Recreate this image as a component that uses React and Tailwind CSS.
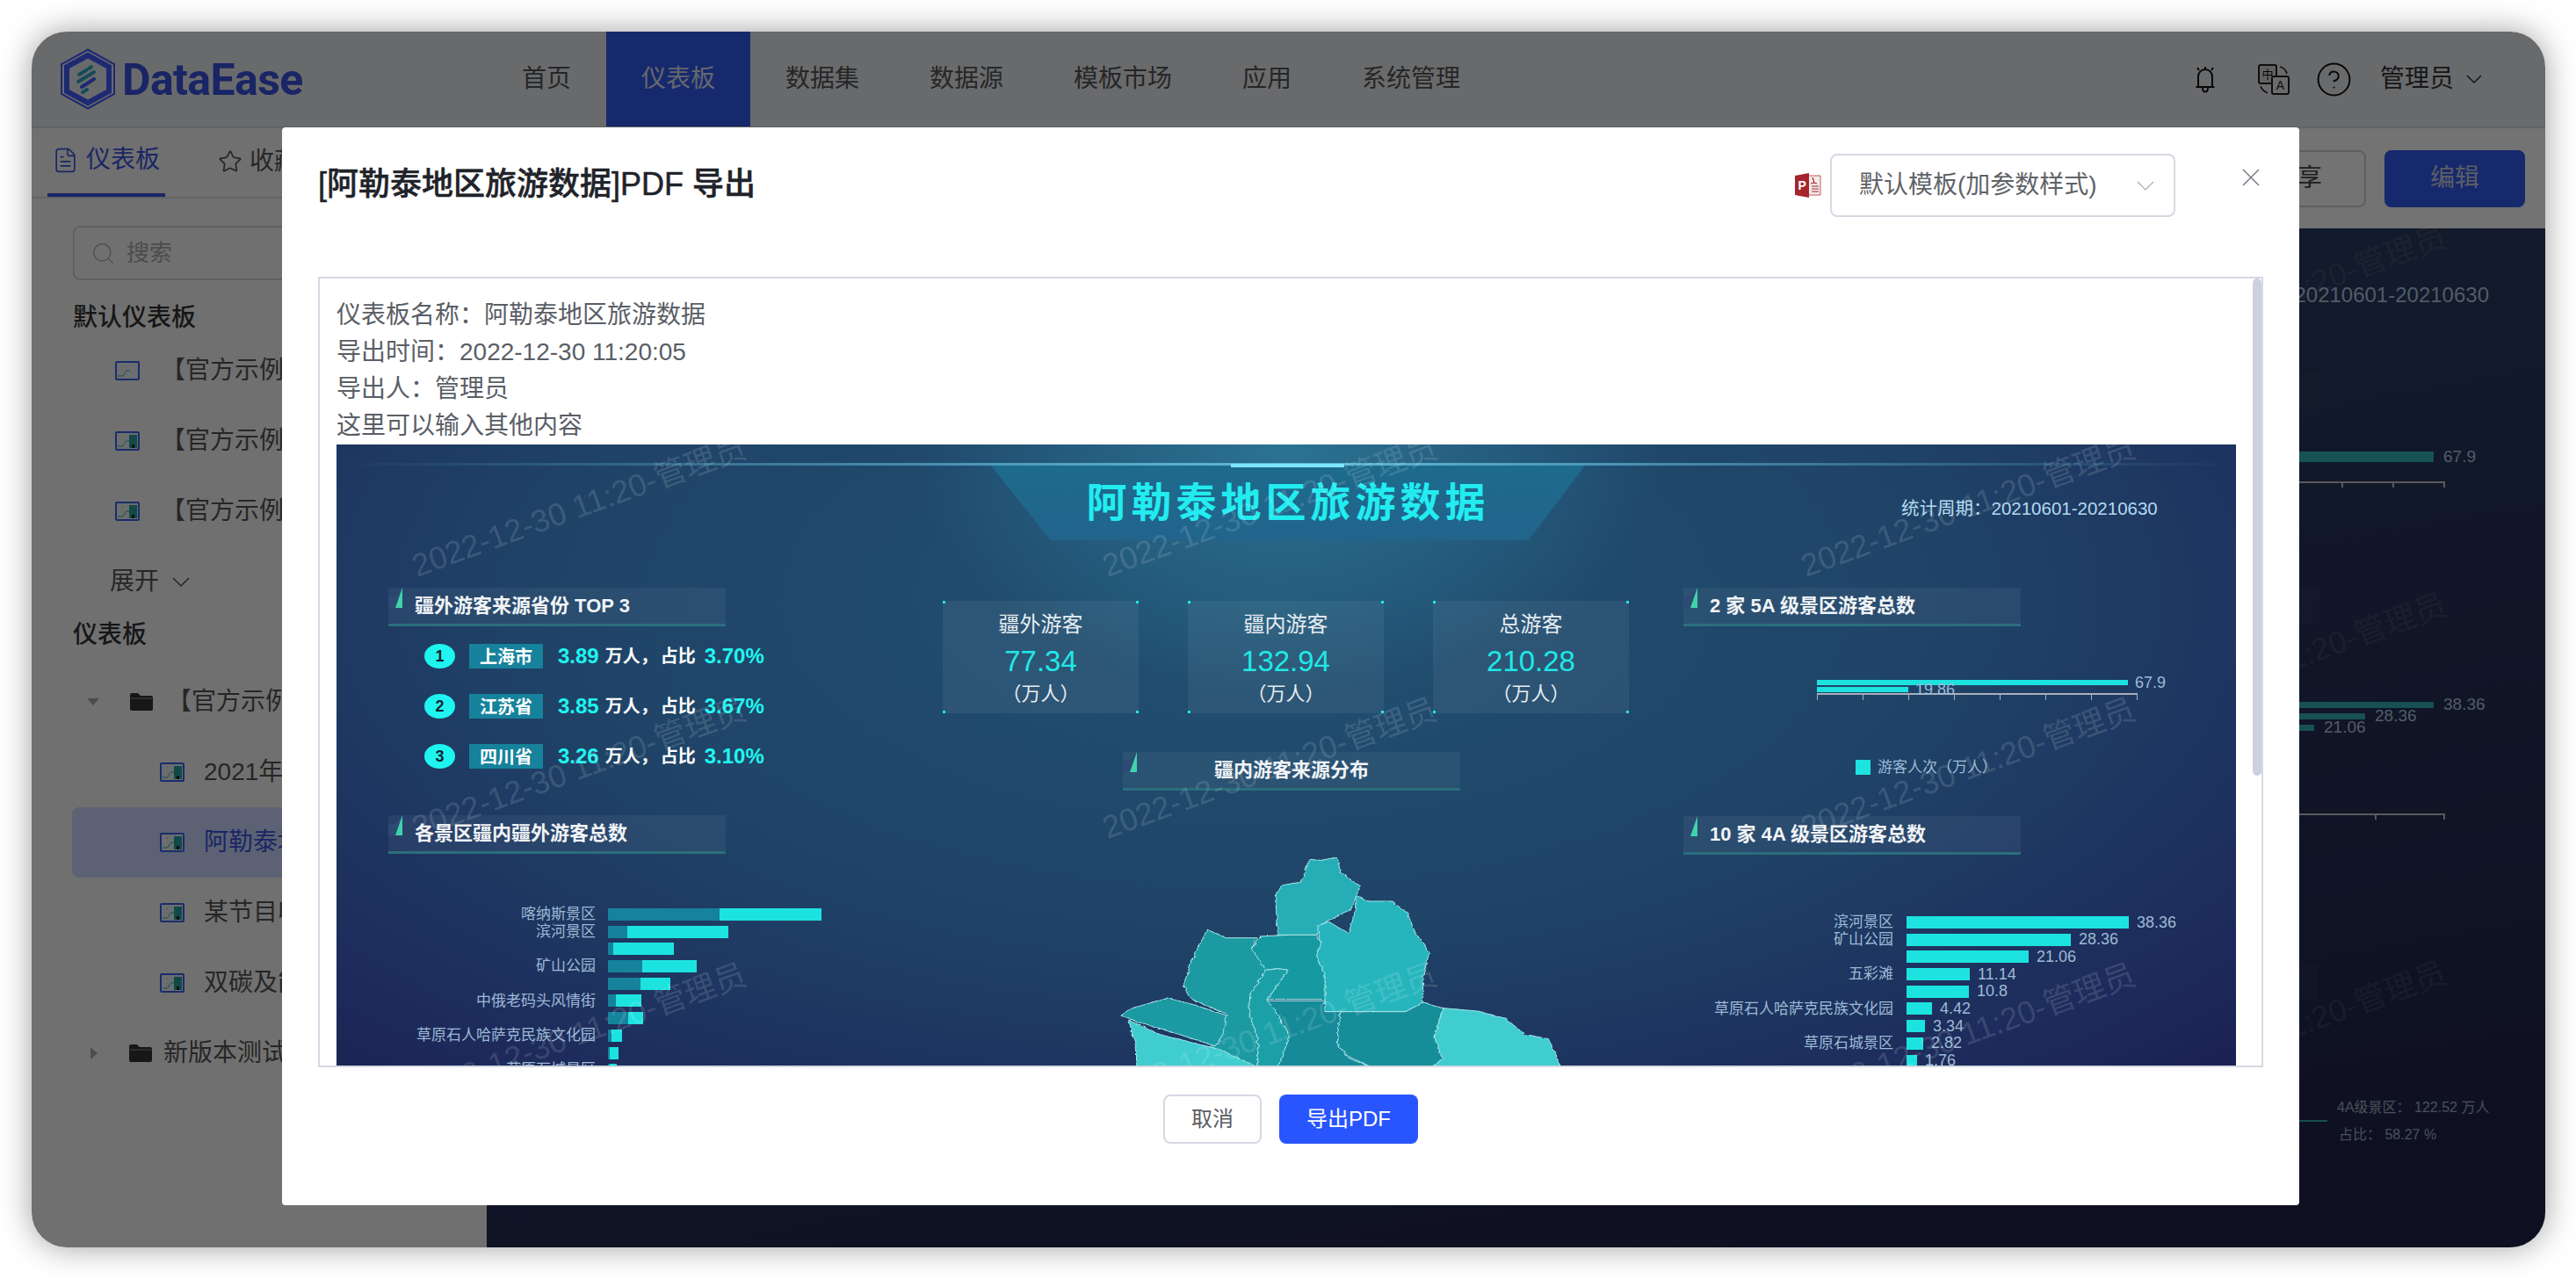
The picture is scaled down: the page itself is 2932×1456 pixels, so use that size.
import React from "react";
import { CircleHelp, FileText, Search, Star } from "lucide-react";

const FONT = "font-['Liberation_Sans','Noto_Sans_CJK_SC',sans-serif]";

function Chev({ w = 20, h = 11, sw = 1.5, className = "" }) {
  return (
    <svg width={w} height={h} viewBox={`0 0 ${w} ${h}`} fill="none" stroke="currentColor" strokeWidth={sw} className={`shrink-0 ${className}`}>
      <path d={`M1 1L${w / 2} ${h - 1}L${w - 1} 1`} />
    </svg>
  );
}

function Logo() {
  return (
    <svg width="64" height="70" viewBox="0 0 64 70" className="shrink-0">
      <polygon points="32,1.5 62,18 62,52 32,68.5 2,52 2,18" fill="none" stroke="#405dff" strokeWidth="2" />
      <polygon points="32,8 56,21 56,49 32,62 8,49 8,21" fill="none" stroke="#405dff" strokeWidth="6" />
      <polygon points="32,15 49,25 49,45 32,55 15,45 15,25" fill="#e9ecf0" />
      <path d="M22 30l8-5M33 23l3-2M21 38l18-11M26 50l5-3" stroke="#2fa7c4" strokeWidth="4" strokeLinecap="round" />
      <path d="M25 44l14-9" stroke="#405dff" strokeWidth="4" strokeLinecap="round" />
    </svg>
  );
}

function Bell() {
  return (
    <svg width="26" height="32" viewBox="0 0 26 32" fill="none" stroke="#111" strokeWidth="2">
      <path d="M5 25V13a8 8 0 0 1 16 0v12z" strokeLinejoin="round" />
      <path d="M2.5 25h21" />
      <path d="M10 26c0 6 6 6 6 0" />
      <path d="M13 2v3M4 3l2 3M22 3l-2 3" />
    </svg>
  );
}

function Translate() {
  return (
    <svg width="36" height="35" viewBox="0 0 36 35" fill="none">
      <rect x="1" y="1" width="20" height="21" rx="2" stroke="#222" strokeWidth="2" fill="#d8d8d8" />
      <text x="11" y="16" textAnchor="middle" fontSize="13" fill="#111" fontFamily="Noto Sans CJK SC">中</text>
      <rect x="16" y="14" width="19" height="20" rx="2" stroke="#222" strokeWidth="2" fill="#eee" />
      <text x="25.5" y="29" textAnchor="middle" fontSize="14" fill="#222" fontFamily="Liberation Sans">A</text>
      <path d="M25 3c4 1 7 4 8 8M3 25c1 4 4 6 8 8" stroke="#222" strokeWidth="1.6" />
    </svg>
  );
}

function Folder() {
  return (
    <svg width="26" height="20" viewBox="0 0 26 20" className="shrink-0">
      <path d="M0 2a2 2 0 0 1 2-2h7l3 3h12a2 2 0 0 1 2 2v13a2 2 0 0 1-2 2H2a2 2 0 0 1-2-2z" fill="#333" />
      <path d="M1 6h24" stroke="#9a9a9a" strokeWidth="1" />
    </svg>
  );
}

function DashIcon({ block = true }) {
  return (
    <svg width="28" height="22" viewBox="0 0 28 22" className="shrink-0">
      <rect x="1" y="1" width="26" height="20" rx="1" fill="#eef4f4" stroke="#3a62ee" strokeWidth="2" />
      <path d="M3 17h5c3 0 2-5 5-6h4M8 6h1" stroke="#2fb3a0" strokeWidth="1" fill="none" />
      {block && <rect x="16" y="4" width="9" height="15" fill="#25a5a0" />}
      {block && <rect x="19" y="15" width="3" height="4" fill="#222" />}
    </svg>
  );
}

function Ppt() {
  return (
    <svg width="30" height="28" viewBox="0 0 30 28">
      <path d="M12 3h17v22H12z" fill="#f3e9e9" stroke="#c65b5b" strokeWidth="1" />
      <path d="M0 3l16-3v28L0 25z" fill="#a4262c" />
      <text x="3.5" y="19" fontSize="14" fontWeight="700" fill="#fff" fontFamily="Liberation Sans">P</text>
      <path d="M20 5l2 6-4 1M22 11l3 1" stroke="#a4262c" strokeWidth="1.2" fill="none" />
      <path d="M19 15h8M19 18h8M19 21h8" stroke="#a4262c" strokeWidth="1.2" />
    </svg>
  );
}

function Watermark({ x, y, color }) {
  return (
    <div
      className="pointer-events-none absolute whitespace-nowrap text-[36px] leading-none -translate-x-1/2 -translate-y-1/2 -rotate-[20deg]"
      style={{ left: x, top: y, color }}
    >
      2022-12-30 11:20-管理员
    </div>
  );
}

function SideRow({ icon, text, active, indent }) {
  return (
    <div className={`flex h-[80px] items-center rounded-lg whitespace-nowrap text-[28px] ${indent} ${active ? "bg-[#cdd9ff] text-[#3a55e0]" : "text-[#555]"}`}>
      {icon}
      <span>{text}</span>
    </div>
  );
}

function Sidebar() {
  return (
    <aside className="w-[518px] shrink-0 overflow-hidden bg-[#f9f9f9]">
      <div className="flex h-[80px] items-end border-b-2 border-[#dedede] pl-[18px]">
        <div className="flex h-[80px] w-[134px] items-center gap-[8px] border-b-4 border-[#3a55e0] pl-[5px] text-[28px] text-[#3a55e0]">
          <FileText size={31} strokeWidth={1.3} />
          <span>仪表板</span>
        </div>
        <div className="ml-[60px] flex h-[80px] items-center gap-[8px] text-[28px] text-[#555]">
          <Star size={28} strokeWidth={1.5} />
          <span>收藏</span>
        </div>
      </div>
      <div className="ml-[47px] mt-[31px] flex h-[62px] w-[424px] items-center gap-[12px] rounded-lg border-2 border-[#d5d6dc] pl-[18px] text-[26px] text-[#aaa]">
        <Search size={29} strokeWidth={1.1} />
        <span>搜索</span>
      </div>
      <h3 className="ml-[47px] mt-[22px] h-[41px] text-[28px] font-medium leading-[41px] text-[#333]">默认仪表板</h3>
      <SideRow indent="pl-[95px] gap-[24px]" icon={<DashIcon block={false} />} text="【官方示例】地区销售数据看板" />
      <SideRow indent="pl-[95px] gap-[24px]" icon={<DashIcon />} text="【官方示例】经营数据分析看板" />
      <SideRow indent="pl-[95px] gap-[24px]" icon={<DashIcon />} text="【官方示例】节目收视分析看板" />
      <div className="ml-[89px] mt-[2px] flex h-[76px] items-center gap-[15px] text-[28px] text-[#555]">
        <span>展开</span>
        <Chev w={20} h={11} />
      </div>
      <h3 className="ml-[47px] mt-[1px] h-[43px] text-[28px] font-medium leading-[43px] text-[#333]">仪表板</h3>
      <div className="ml-[46px] mt-[15px] w-[460px]">
        <SideRow
          indent="pl-[17px]"
          icon={<span className="flex items-center"><span className="h-0 w-0 border-x-[7px] border-t-[8px] border-x-transparent border-t-[#aaa]" /><span className="ml-[35px]"><Folder /></span><span className="w-[16px]" /></span>}
          text="【官方示例】数据大屏"
        />
        <SideRow indent="pl-[100px] gap-[22px]" icon={<DashIcon />} text="2021年度数据报告" />
        <SideRow active indent="pl-[100px] gap-[22px]" icon={<DashIcon />} text="阿勒泰地区旅游数据" />
        <SideRow indent="pl-[100px] gap-[22px]" icon={<DashIcon />} text="某节目收视数据分析" />
        <SideRow indent="pl-[100px] gap-[22px]" icon={<DashIcon />} text="双碳及能源数据看板" />
        <SideRow
          indent="pl-[21px]"
          icon={<span className="flex items-center"><span className="h-0 w-0 border-y-[7px] border-l-[8px] border-y-transparent border-l-[#aaa]" /><span className="ml-[36px]"><Folder /></span><span className="w-[13px]" /></span>}
          text="新版本测试仪表板"
        />
      </div>
    </aside>
  );
}

function Axis({ ticks, width }) {
  return (
    <div className="flex h-[8px] justify-end border-t-2 border-[#c8c8c8]" style={{ width }}>
      {ticks.map((t, i) => (
        <div key={i} className="h-[5px] border-r-2 border-[#c8c8c8]" style={{ width: t }} />
      ))}
    </div>
  );
}

function Main() {
  const rows = [
    { w: 437, v: "38.36" },
    { w: 359, v: "28.36" },
    { w: 301, v: "21.06" },
  ];
  return (
    <main className="flex flex-1 flex-col">
      <div className="flex h-[114px] items-center justify-end gap-[21px] pr-[23px]">
        <button className="h-[65px] w-[156px] rounded-lg border-2 border-[#d0d0d0] text-[28px] text-[#444]">分享</button>
        <button className="h-[65px] w-[160px] rounded-lg bg-[#325bef] text-[28px] text-[#c9d0e4]">编辑</button>
      </div>
      <div className="relative flex flex-1 flex-col items-end overflow-hidden bg-[linear-gradient(170deg,#2a4567_0%,#263158_55%,#202247_100%)] text-[#b4cbe4]">
        <div className="mr-[64px] mt-[62px] h-[28px] text-[24px] leading-[28px]">20210601-20210630</div>
        <div className="mr-[258px] mt-[74px] h-[41px] w-[400px] bg-white/[.03]" />
        <div className="mr-[64px] mt-[49px] flex h-[12px] items-center gap-[11px]">
          <div className="h-[12px] w-[400px] bg-[#3aebe3]/70" />
          <span className="w-[52px] text-[19px]">67.9</span>
        </div>
        <div className="mr-[114px] mt-[22px]">
          <Axis ticks={[58, 58, 58]} width={400} />
        </div>
        <div className="mr-[258px] mt-[113px] h-[41px] w-[400px] bg-white/[.03]" />
        <div className="mr-[64px] mt-[89px] flex w-[500px] flex-col gap-[6px]">
          {rows.map((r) => (
            <div key={r.v} className="flex h-[7px] items-center gap-[11px]">
              <div className="h-[7px] bg-[#3aebe3]/70" style={{ width: r.w }} />
              <span className="text-[19px]">{r.v}</span>
            </div>
          ))}
        </div>
        <div className="mr-[114px] mt-[94px]">
          <Axis ticks={[78, 78]} width={400} />
        </div>
        <div className="mr-[258px] mt-[163px] h-[41px] w-[400px] bg-white/[.03]" />
        <div className="mr-[67px] mt-[107px] flex items-center gap-[11px]">
          <div className="h-[2px] w-[300px] bg-[#3aebe3]/70" />
          <div className="w-[170px] whitespace-nowrap text-[16px] leading-[31px] text-[#9fb2c8]">
            <div>4A级景区： 122.52 万人</div>
            <div className="pl-[2px]">占比： 58.27 %</div>
          </div>
        </div>
        <Watermark x={2040} y={77} color="rgba(255,255,255,.1)" />
        <Watermark x={2040} y={496} color="rgba(255,255,255,.1)" />
        <Watermark x={2040} y={915} color="rgba(255,255,255,.1)" />
      </div>
    </main>
  );
}

function TitleCard({ text, center, extra = "" }) {
  return (
    <div className={`relative flex h-[44px] items-center border-b-[3px] border-[#2b6e7c] bg-white/[.05] ${center ? "justify-center" : "pl-[30px]"} ${extra}`}>
      <svg width="16" height="23" viewBox="0 0 16 23" className="absolute left-0 top-0">
        <path d="M0 23V10h7l9-10v23z" fill="#2d4a72" />
        <path d="M16 0v23H8z" fill="#3fd3ab" />
      </svg>
      <span className="text-[22px] font-bold text-[#f1f4f7]">{text}</span>
    </div>
  );
}

function Rank({ n, city, num, pct }) {
  return (
    <div className="flex h-[28px] items-center pl-[41px]">
      <span className="flex h-[28px] w-[35px] items-center justify-center rounded-[50%] bg-[#1ff5f0] text-[18px] font-bold text-[#123]">{n}</span>
      <span className="ml-[16px] flex h-[28px] w-[84px] items-end justify-center bg-[#16829c] text-[20px] font-bold leading-[26px] text-white">{city}</span>
      <span className="ml-[17px] text-[24px] font-bold text-[#1ff5f0]">{num}</span>
      <span className="ml-[7px] text-[20px] font-bold text-white">万人，</span>
      <span className="ml-[3px] text-[20px] font-bold text-white">占比</span>
      <span className="ml-[10px] text-[24px] font-bold text-[#1ff5f0]">{pct}</span>
    </div>
  );
}

function StatCard({ title, value }) {
  return (
    <div className="relative flex h-[128px] w-[223px] flex-col items-center bg-white/[.06] pt-[11px]">
      <span className="absolute left-0 top-0 h-[3px] w-[3px] bg-[#1fe8e6]" />
      <span className="absolute right-0 top-0 h-[3px] w-[3px] bg-[#1fe8e6]" />
      <span className="absolute bottom-0 left-0 h-[3px] w-[3px] bg-[#1fe8e6]" />
      <span className="absolute bottom-0 right-0 h-[3px] w-[3px] bg-[#1fe8e6]" />
      <span className="text-[24px] leading-[32px] text-[#e6edf2]">{title}</span>
      <span className="mt-[6px] text-[33px] leading-[40px] text-[#1fe8e6]">{value}</span>
      <span className="mt-[2px] text-[22px] leading-[30px] text-[#e6edf2]">（万人）</span>
    </div>
  );
}

function StackBars() {
  const data = [
    ["喀纳斯景区", 127, 116],
    ["滨河景区", 22, 115],
    ["", 6, 69],
    ["矿山公园", 39, 62],
    ["", 37, 34],
    ["中俄老码头风情街", 9, 29],
    ["", 23, 17],
    ["草原石人哈萨克民族文化园", 4, 12],
    ["", 2, 10],
    ["草原石城景区", 2, 8],
  ];
  return (
    <div className="mt-[62px] flex flex-col gap-[5.7px]">
      {data.map(([label, a, b], i) => (
        <div key={i} className="flex h-[14px] items-center">
          <span className="w-[236px] shrink-0 whitespace-nowrap text-right text-[17px] text-[#9dbad6]">{label}</span>
          <div className="ml-[14px] h-[14px] shrink-0 bg-[#16829c]" style={{ width: a }} />
          <div className="h-[14px] shrink-0 bg-[#1de3e0]" style={{ width: b }} />
        </div>
      ))}
    </div>
  );
}

function TenBars() {
  const data = [
    ["滨河景区", 253, "38.36"],
    ["矿山公园", 187, "28.36"],
    ["", 139, "21.06"],
    ["五彩滩", 72, "11.14"],
    ["", 71, "10.8"],
    ["草原石人哈萨克民族文化园", 29, "4.42"],
    ["", 21, "3.34"],
    ["草原石城景区", 19, "2.82"],
    ["", 12, "1.76"],
  ];
  return (
    <div className="mt-[70px] flex flex-col gap-[5.7px]">
      {data.map(([label, w, v], i) => (
        <div key={i} className="flex h-[14px] items-center">
          <span className="w-[239px] shrink-0 whitespace-nowrap text-right text-[17px] text-[#9dbad6]">{label}</span>
          <div className="ml-[15px] h-[14px] shrink-0 bg-[#1de3e0]" style={{ width: w }} />
          <span className="ml-[9px] shrink-0 text-[18px] text-[#9dbad6]">{v}</span>
        </div>
      ))}
    </div>
  );
}

function MapShape() {
  const regions = [
    ["#28aeb6", "325,172 340,175 360,165 365,215 390,265 385,295 380,340 340,395 335,430 300,430 285,430 282,300 290,260 315,250"],
    ["#26b5bd", "385,295 400,315 430,315 450,355 460,420 478,490 470,570 470,660 448,692 345,692 345,570 335,500 340,460 335,400 350,385 375,425 385,340"],
    ["#199aa2", "262,435 300,430 335,430 340,460 335,500 345,570 345,650 272,650 298,550 285,545 270,550 255,510 252,480"],
    ["#1b9aa2", "195,412 220,440 258,440 252,480 270,550 250,630 248,700 260,780 260,882 130,882 210,800 220,700 175,650 165,600 175,520"],
    ["#1ca0a8", "285,545 298,550 272,650 285,700 300,780 285,882 260,882 260,780 248,700 250,630 270,550"],
    ["#1a9aa4", "85,705 100,680 145,645 180,670 220,705 215,770 205,810 160,770 110,730"],
    ["#3fcdd0", "95,720 135,770 210,820 260,882 105,882 105,820"],
    ["#178a98", "272,655 345,655 345,692 365,692 360,800 375,850 405,882 285,882 300,780 285,700"],
    ["#178e9a", "365,692 448,692 470,660 495,680 485,780 495,855 480,882 405,882 375,845 360,800"],
    ["#3fcdd0", "495,680 540,690 575,715 600,770 630,785 645,882 480,882 495,855 485,780"],
  ];
  return (
    <svg width="503" height="239" viewBox="82 165 563 717" preserveAspectRatio="none" className="ml-[200px] mt-[76px] block">
      <defs>
        <filter id="rough" x="-5%" y="-5%" width="110%" height="110%">
          <feTurbulence type="fractalNoise" baseFrequency="0.09" numOctaves="2" seed="4" />
          <feDisplacementMap in="SourceGraphic" scale="6" xChannelSelector="R" yChannelSelector="G" />
        </filter>
      </defs>
      <g filter="url(#rough)">
        {regions.map(([fill, pts], i) => (
          <polygon key={i} points={pts} fill={fill} stroke="#a9e8ea" strokeWidth="1" vectorEffect="non-scaling-stroke" />
        ))}
      </g>
    </svg>
  );
}

function DashboardImage() {
  const wm = "rgba(255,255,255,.14)";
  return (
    <div className="relative h-[707px] w-[2162px] overflow-hidden bg-[radial-gradient(ellipse_at_50%_0%,#2b7393_0%,rgba(43,115,147,0)_28%),radial-gradient(ellipse_75%_110%_at_48%_25%,#215172_0%,#1f4367_50%,#1d2a5b_85%,#1b1f50_100%)]">
      <div className="mt-[21px] h-[3px] bg-[linear-gradient(90deg,rgba(95,185,216,0)_0%,#5fb9d8_50%,rgba(95,185,216,0)_100%)]" />
      <div className="flex items-start">
        <div className="relative ml-[745px] h-[85px] w-[676px]">
          <div className="absolute inset-0 bg-[linear-gradient(180deg,#1d6b8c,#22648c)] [clip-path:polygon(0_0,100%_0,90.5%_100%,10%_100%)]" />
          <div className="absolute left-[273px] top-[-2px] h-[4px] w-[129px] bg-[#7fe6ff]" />
          <div className="relative flex h-full items-center justify-center text-[46px] font-bold tracking-[5px] text-[#22ecf0]">阿勒泰地区旅游数据</div>
        </div>
        <div className="ml-[360px] mt-[35px] text-[20.5px] leading-[28px] text-[#b3d9f0]">统计周期：20210601-20210630</div>
      </div>
      <div className="mt-[54px] flex pl-[59px]">
        <div className="w-[631px] shrink-0">
          <TitleCard text="疆外游客来源省份 TOP 3" extra="w-[384px]" />
          <div className="mt-[20px] flex flex-col gap-[29px]">
            <Rank n="1" city="上海市" num="3.89" pct="3.70%" />
            <Rank n="2" city="江苏省" num="3.85" pct="3.67%" />
            <Rank n="3" city="四川省" num="3.26" pct="3.10%" />
          </div>
          <TitleCard text="各景区疆内疆外游客总数" extra="w-[384px] mt-[53px]" />
          <StackBars />
        </div>
        <div className="w-[843px] shrink-0">
          <div className="mt-[15px] flex gap-[56px]">
            <StatCard title="疆外游客" value="77.34" />
            <StatCard title="疆内游客" value="132.94" />
            <StatCard title="总游客" value="210.28" />
          </div>
          <TitleCard center text="疆内游客来源分布" extra="ml-[205px] mt-[44px] w-[384px]" />
          <MapShape />
        </div>
        <div className="w-[384px] shrink-0">
          <TitleCard text="2 家 5A 级景区游客总数" extra="w-[384px]" />
          <div className="ml-[152px] mt-[61px] w-[365px]">
            <div className="flex h-[6px] items-center gap-[8px]">
              <div className="h-[6px] w-[354px] shrink-0 bg-[#1de3e0]" />
              <span className="shrink-0 whitespace-nowrap text-[18px] text-[#9dbad6]">67.9</span>
            </div>
            <div className="mt-[2px] flex h-[6px] items-center gap-[8px]">
              <div className="h-[6px] w-[104px] shrink-0 bg-[#1de3e0]" />
              <span className="shrink-0 whitespace-nowrap text-[18px] text-[#9dbad6]">19.86</span>
            </div>
            <div className="mt-[1px] flex h-[8px] justify-between border-t-2 border-[#a9b0b8]">
              {[0, 1, 2, 3, 4, 5, 6, 7].map((i) => (
                <span key={i} className="h-[6px] w-[1px] bg-[#a9b0b8]" />
              ))}
            </div>
          </div>
          <div className="ml-[196px] mt-[68px] flex h-[17px] items-center gap-[8px]">
            <span className="h-[17px] w-[17px] bg-[#1de3e0]" />
            <span className="whitespace-nowrap text-[17px] text-[#9dbad6]">游客人次（万人）</span>
          </div>
          <TitleCard text="10 家 4A 级景区游客总数" extra="mt-[47px] w-[384px]" />
          <TenBars />
        </div>
      </div>
      {[71, 369, 671].map((y) =>
        [276, 1062, 1857].map((x) => <Watermark key={`${x}-${y}`} x={x} y={y} color={wm} />)
      )}
    </div>
  );
}

function Modal() {
  return (
    <div className="absolute left-[285px] top-[109px] flex h-[1227px] w-[2296px] flex-col rounded-[4px] bg-white">
      <div className="flex h-[170px] shrink-0 items-start justify-between pl-[41px] pr-[45px]">
        <h2 className="pt-[40px] text-[36px] font-medium leading-[50px] text-[#1f2329] [-webkit-text-stroke:0.5px_#1f2329]">[阿勒泰地区旅游数据]PDF 导出</h2>
        <div className="flex items-start">
          <div className="mr-[10px] mt-[52px]"><Ppt /></div>
          <div className="mt-[30px] flex h-[72px] w-[393px] items-center justify-between rounded-lg border-2 border-[#d5d9e3] pl-[31px] pr-[22px] text-[28px] text-[#5f6368]">
            <span>默认模板(加参数样式)</span>
            <Chev w={20} h={11} sw={1.2} className="text-[#a8abb2]" />
          </div>
          <svg width="20" height="20" viewBox="0 0 20 20" fill="none" stroke="#777b82" strokeWidth="1.5" className="ml-[76px] mt-[47px] shrink-0">
            <path d="M1 1l18 18M19 1L1 19" />
          </svg>
        </div>
      </div>
      <div className="relative mx-[41px] h-[900px] shrink-0 overflow-hidden border-2 border-[#d5d9e3] pl-[19px] pt-[21px]">
        <div className="text-[28px] leading-[42px] text-[#5a5e66]">
          <div>仪表板名称：阿勒泰地区旅游数据</div>
          <div>导出时间：2022-12-30 11:20:05</div>
          <div>导出人：管理员</div>
          <div>这里可以输入其他内容</div>
        </div>
        <DashboardImage />
        <div className="absolute right-0 top-0 h-[566px] w-[10px] rounded-full bg-[#cdd0de]" />
      </div>
      <div className="mt-[31px] flex justify-center gap-[20px]">
        <button className="h-[56px] w-[112px] rounded-lg border-2 border-[#d5d9e3] text-[24px] text-[#5a5e66]">取消</button>
        <button className="h-[56px] w-[158px] rounded-lg bg-[#2955ff] text-[24px] text-white">导出PDF</button>
      </div>
    </div>
  );
}

export default function App() {
  const nav = [
    ["首页", false],
    ["仪表板", true],
    ["数据集", false],
    ["数据源", false],
    ["模板市场", false],
    ["应用", false],
    ["系统管理", false],
  ];
  return (
    <div className={`h-[1456px] w-[2932px] overflow-hidden bg-white pl-[36px] pt-[36px] ${FONT}`}>
      <div className="relative flex h-[1384px] w-[2861px] flex-col overflow-visible rounded-[40px] shadow-[0_0_36px_rgba(0,0,0,.38)]">
        <div className="flex h-full flex-col overflow-hidden rounded-[40px]">
          <header className="flex h-[110px] shrink-0 items-stretch border-b-2 border-[#dadce0] bg-[#e9ecf0]">
            <div className="flex w-[518px] items-center pl-[32px]">
              <Logo />
              <span className="ml-[7px] mt-[2px] font-['Roboto',sans-serif] text-[50px] font-bold tracking-[-0.6px] text-[#3a52e0]">DataEase</span>
            </div>
            <nav className="flex">
              {nav.map(([t, a]) => (
                <div key={t} className={`flex items-center px-[40px] text-[28px] ${a ? "bg-[#325bef] text-[#dfe5f5]" : "text-[#555]"}`}>{t}</div>
              ))}
            </nav>
            <div className="ml-auto flex items-center pr-[72px]">
              <Bell />
              <span className="ml-[47px]"><Translate /></span>
              <CircleHelp size={43} strokeWidth={1.1} className="ml-[29px] text-[#111]" />
              <span className="ml-[31px] text-[28px] text-[#333]">管理员</span>
              <Chev w={18} h={10} className="ml-[14px] text-[#333]" />
            </div>
          </header>
          <div className="flex min-h-0 flex-1">
            <Sidebar />
            <Main />
          </div>
        </div>
        <div className="absolute inset-0 rounded-[40px] bg-black/55" />
        <Modal />
      </div>
    </div>
  );
}
